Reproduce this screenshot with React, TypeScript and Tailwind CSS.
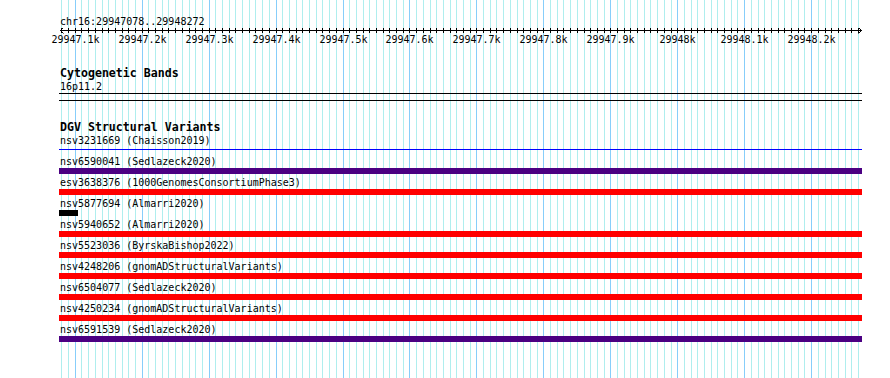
const START = 29947078
const END = 29948272
const LEFT = 60
const SCALE = 800 / (END - START + 1)

const xOf = (bp: number) => Math.round(LEFT + (bp - START) * SCALE)

const gridStops: number[] = []
for (let bp = 29947080; bp <= END; bp += 10) gridStops.push(bp)

const majorLabels = [
  [29947100, '29947.1k'],
  [29947200, '29947.2k'],
  [29947300, '29947.3k'],
  [29947400, '29947.4k'],
  [29947500, '29947.5k'],
  [29947600, '29947.6k'],
  [29947700, '29947.7k'],
  [29947800, '29947.8k'],
  [29947900, '29947.9k'],
  [29948000, '29948k'],
  [29948100, '29948.1k'],
  [29948200, '29948.2k'],
] as const

type Variant = {
  id:     string
  study:  string
  kind:   'line' | 'bar'
  color:  string
  width?: number
}

const variants: Variant[] = [
  { id: 'nsv3231669', study: 'Chaisson2019',                kind: 'line', color: 'bg-[#0000ff]' },
  { id: 'nsv6590041', study: 'Sedlazeck2020',               kind: 'bar',  color: 'bg-[#4b0082]' },
  { id: 'esv3638376', study: '1000GenomesConsortiumPhase3', kind: 'bar',  color: 'bg-[#ff0000]' },
  { id: 'nsv5877694', study: 'Almarri2020',                 kind: 'bar',  color: 'bg-black', width: 19 },
  { id: 'nsv5940652', study: 'Almarri2020',                 kind: 'bar',  color: 'bg-[#ff0000]' },
  { id: 'nsv5523036', study: 'ByrskaBishop2022',            kind: 'bar',  color: 'bg-[#ff0000]' },
  { id: 'nsv4248206', study: 'gnomADStructuralVariants',    kind: 'bar',  color: 'bg-[#ff0000]' },
  { id: 'nsv6504077', study: 'Sedlazeck2020',               kind: 'bar',  color: 'bg-[#ff0000]' },
  { id: 'nsv4250234', study: 'gnomADStructuralVariants',    kind: 'bar',  color: 'bg-[#ff0000]' },
  { id: 'nsv6591539', study: 'Sedlazeck2020',               kind: 'bar',  color: 'bg-[#4b0082]' },
]

function Grid() {
  return (
    <svg className="absolute inset-0" width={890} height={378} shapeRendering="crispEdges">
      {gridStops.map((bp) => (
        <rect
          key={bp}
          x={xOf(bp)}
          y={0}
          width={1}
          height={378}
          fill={bp % 100 === 0 ? '#87cefa' : '#afeeee'}
        />
      ))}
    </svg>
  )
}

function Ruler() {
  return (
    <svg className="block" width={890} height={39} shapeRendering="crispEdges">
      <rect x={60} y={2} width={802} height={1} fill="#000" />
      {gridStops.map((bp) => (
        <rect key={bp} x={xOf(bp)} y={0} width={1} height={5} fill="#000" />
      ))}
      {/* arrow heads */}
      <path d="M60.5 2.5 L63.5 -0.5 M60.5 2.5 L63.5 5.5" stroke="#000" fill="none" shapeRendering="auto" />
      <path d="M861.5 2.5 L858.5 -0.5 M861.5 2.5 L858.5 5.5" stroke="#000" fill="none" shapeRendering="auto" />
      {majorLabels.map(([bp, label]) => (
        <text
          key={bp}
          x={xOf(bp) + 0.5}
          y={15}
          textAnchor="middle"
          fontFamily="'DejaVu Sans Mono', monospace"
          fontSize={10}
          fill="#000"
        >
          {label}
        </text>
      ))}
    </svg>
  )
}

function TrackTitle({ children }: { children: React.ReactNode }) {
  return <h2 className="h-[13px] pl-px text-[11.6px] leading-[13px] font-bold">{children}</h2>
}

function Label({ children }: { children: React.ReactNode }) {
  return <p className="h-[13px] pl-px text-[10px] leading-[13px] whitespace-pre">{children}</p>
}

export default function App() {
  return (
    <div className="relative w-[890px] h-[378px] overflow-hidden bg-white text-black font-['DejaVu_Sans_Mono',monospace]">
      <Grid />

      <div className="relative flex flex-col pt-[15px]">
        <p className="h-[13px] pl-[60px] text-[10px] leading-[13px]">chr16:29947078..29948272</p>
        <Ruler />

        {/* Cytogenetic bands */}
        <section className="pl-[59px]">
          <TrackTitle>Cytogenetic Bands</TrackTitle>
          <Label>16p11.2</Label>
          <div className="w-[803px] h-[8px] border-y border-black" />
        </section>

        {/* DGV */}
        <section className="pl-[59px] mt-[20px]">
          <TrackTitle>DGV Structural Variants</TrackTitle>
          <div className="flex flex-col gap-[2px]">
            {variants.map((v) => (
              <div key={v.id} className="flex flex-col">
                <Label>{`${v.id} (${v.study})`}</Label>
                <div className="flex flex-col h-[6px] pt-[2px] data-[bar=true]:pt-0" data-bar={v.kind === 'bar'}>
                  {v.kind === 'line' ? (
                    <div className="h-px w-[803px] bg-[#0000ff]" />
                  ) : (
                    <div
                      className={`h-[6px] ${v.color}`}
                      style={{ width: v.width ?? 803 }}
                    />
                  )}
                </div>
              </div>
            ))}
          </div>
        </section>
      </div>
    </div>
  )
}
